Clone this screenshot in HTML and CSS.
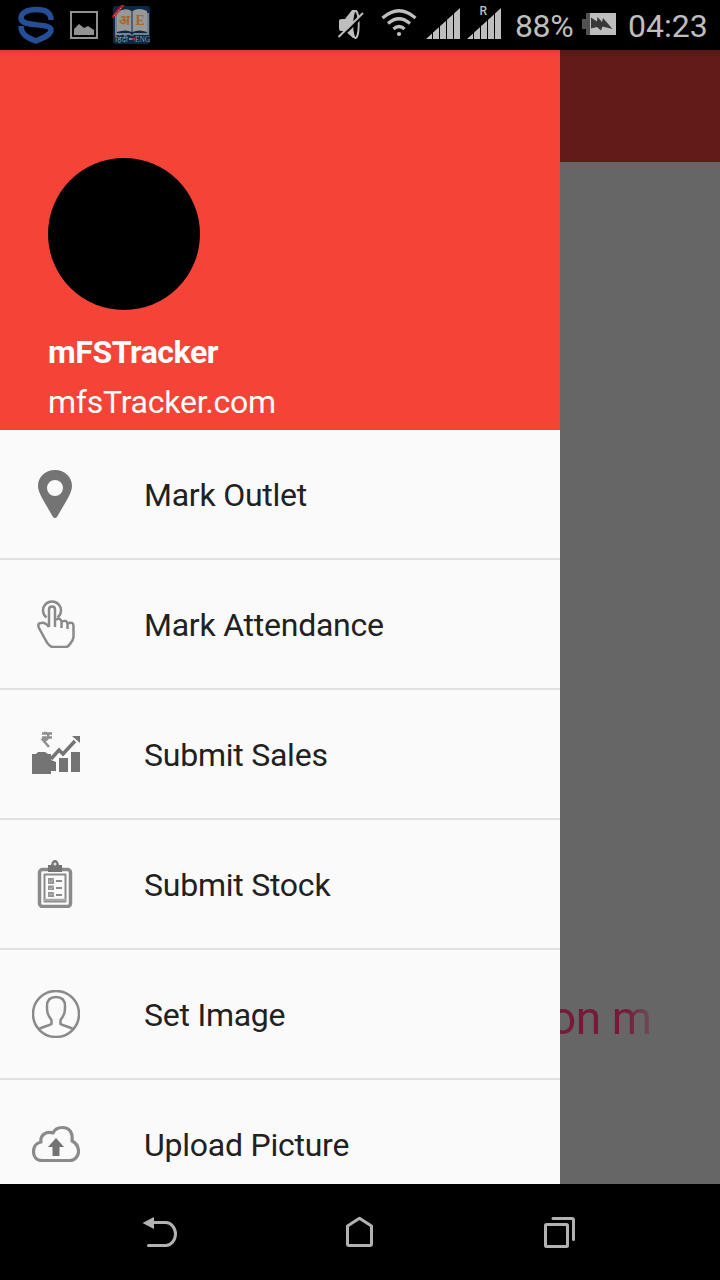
FILE: index.html
```html
<!DOCTYPE html>
<html lang="en">
<head>
<meta charset="utf-8">
<title>mFSTracker</title>
<link rel="stylesheet" href="styles.css">
</head>
<body>
<div class="phone">
  <header class="status">
    <svg class="notifications" width="180" height="50" viewBox="0 0 180 50">
      <path d="M51 20C51 12 44 9.500 36 9.500C27 9.500 21 13 21 18C21 28 51 22 51 30C51 35 43 38 36 41C28 38 21 35 21 26" fill="none" stroke="#244f96" stroke-width="5.500"/>
      <path d="M71 12H97V38H71Z" fill="none" stroke="#929292" stroke-width="2"/>
      <path d="M74 35V29L79 24L84 28L88 26L94 30V35Z" fill="#929292"/>
      <rect x="113" y="6" width="37" height="38" rx="3" fill="#0d2744"/>
      <path d="M115 14V35H130Q132 37 134 35H149V13H147V33H134L132 35L130 33H117V14Z" fill="#6f8592"/>
      <path d="M117 12Q126 7 131.500 11V32Q126 29 117 32ZM132.500 11Q139 7 147 11V32Q139 29 132.500 32Z" fill="#979898"/>
      <text class="book-letter" x="119" y="25" textLength="11" lengthAdjust="spacingAndGlyphs">अ</text>
      <text class="book-letter" x="135.500" y="25">E</text>
      <path d="M112 16L121 5H125L113 19Z" fill="#b31824"/>
      <path d="M114 16L122 7" stroke="#ca8c8f" stroke-width="1" stroke-dasharray="2 1"/>
      <text class="book-caption" x="115" y="42" textLength="13" lengthAdjust="spacingAndGlyphs">हिंदी</text>
      <path d="M129 39H134" stroke="#758994" stroke-width="2"/>
      <path d="M131 39L135 37V41Z" fill="#b8202a"/>
      <text class="book-caption" x="135" y="42" textLength="15" lengthAdjust="spacingAndGlyphs">ENG</text>
    </svg>
    <div class="system">
      <svg width="171" height="50" viewBox="335 0 171 50" fill="#bebebe">
        <path d="M339 21Q339 19 342 19H345L352 10H357V38H353L345 31H341Q339 31 339 28Z"/>
        <ellipse cx="355.500" cy="24.500" rx="3.200" ry="13.500" fill="#000" stroke="#bebebe" stroke-width="1.800"/>
        <path d="M339.500 38.500L364.500 14.500" stroke="#000" stroke-width="2.500"/>
        <path d="M338.500 37L363 13" stroke="#bebebe" stroke-width="2"/>
        <g fill="none" stroke="#bebebe" stroke-width="3.200">
          <path d="M382.500 18Q399 3.500 415.500 18"/><path d="M388 23.500Q399 14 410 23.500"/><path d="M393.500 29Q399 24 404.500 29"/>
        </g>
        <circle cx="399" cy="34" r="2.100"/>
        <path d="M426 39L460 8V39ZM467 39L501 8V39Z"/>
        <path d="M432.500 10V40M439.500 8V40M446.500 8V40M453.500 8V40M473.500 18V40M480.500 18V40M487.500 8V40M494.500 8V40" stroke="#000" stroke-width="1"/>
        <text class="roaming" x="479.500" y="14.500">R</text>
      </svg>
      <span class="percent">88%</span>
      <svg class="battery" width="34" height="24" viewBox="582 0 34 24">
        <path d="M582 7H586V1H590V23H586V17H582Z" fill="#515151"/>
        <path d="M590 1H616V23H590Z" fill="#bebebe"/>
        <path d="M591 5.500L597 9.500L597.500 5L602 10L603 6L612.500 17L602.500 14.500L601 18.500L597 15L591 16.500Z" fill="#383838"/>
      </svg>
      <time class="clock">04:23</time>
    </div>
  </header>
  <main class="screen">
    <aside class="drawer">
      <section class="profile">
        <div class="avatar"></div>
        <h1 class="name">mFSTracker</h1>
        <p class="site">mfsTracker.com</p>
      </section>
      <nav class="menu">
        <a class="item"><svg class="icon" viewBox="0 0 48 48"><path fill-rule="evenodd" d="M23 0C13 0 6 7 6 16C6 20 8 24 10 28L21 47Q23 49 25 47L36 28C38 24 40 20 40 16C40 7 33 0 23 0ZM23 10A8 8 0 1 1 23 26A8 8 0 1 1 23 10Z" fill="#747474"/></svg><span class="label">Mark Outlet</span></a>
        <a class="item"><svg class="icon line" viewBox="0 0 48 48"><path d="M14.500 17.500A9 9 0 1 1 25.500 17.500M17 27V9.500Q17 6.500 20 6.500Q23 6.500 23 9.500V27M23 20Q29 17 29.500 22V28M29.500 22Q35 19 35.500 24V29M35.500 23.500Q41.500 21 41.500 26V37Q41 41 38 44Q36 47 34 47H21C18 47 15 43 13 39L7 28Q5 23 9 23Q13 22 17 27"/></svg><span class="label">Mark Attendance</span></a>
        <a class="item"><svg class="icon" viewBox="0 0 48 48"><path d="M0 24H4L6 22H13L16 24H19V30L24 32V41H19V44H0ZM27 28H36V42H27ZM39 22H48V42H39Z" fill="#747474"/><path d="M19 29L27 20L31 24L43 11" fill="none" stroke="#747474" stroke-width="3.500"/><path d="M40 6H48V13Z" fill="#747474"/><path d="M10 3.500H20M10 7.500H20M12 3H14Q19 6 14 10H11L17 17" fill="none" stroke="#8f8f8f" stroke-width="2.500"/></svg><span class="label">Submit Sales</span></a>
        <a class="item"><svg class="icon line" viewBox="0 0 48 48"><rect x="7.500" y="9.500" width="31" height="37" rx="3" stroke-width="3.500"/><rect x="12.500" y="14.500" width="21" height="27" stroke-width="2"/><path d="M16 5H19Q20 0 23 0Q26 0 27 5H30V12H16Z" fill="#747474" stroke="none"/><circle cx="23" cy="4" r="1.500" fill="#e0e0e0" stroke="none"/><path d="M12 40H34" stroke="#a7a7a7"/><path d="M16 18H22V24H16ZM16 25.500H22V30H16ZM16 32H22V37H16Z" fill="#959595" stroke="none"/><path d="M17 21L19 22L22 19M17 28L19 29L22 26M17 34L19 35L22 33" stroke="#b8b8b8" stroke-width="1"/><path d="M24 21H30M24 28H30M24 35H30" stroke-width="2"/></svg><span class="label">Submit Stock</span></a>
        <a class="item"><svg class="icon line" viewBox="0 0 48 48"><circle cx="24" cy="24" r="23"/><path d="M7 39C12 36 17 36 19.500 34V30C15 24 15 22 15 16Q15 7 24 7Q33 7 33 16C33 22 33 24 28.500 30V34C31 36 36 36 41 39"/></svg><span class="label">Set Image</span></a>
        <a class="item last"><svg class="icon line" viewBox="0 0 48 48"><path stroke-width="3.200" d="M10 40.500C4 40.500 1.500 36 1.500 31.500C1.500 27 4 23 9 22C8 15 14 11 21 13C23 9 26 7.500 30 7.500C38 7.500 41 13 40 21C44 23 46.500 27 46.500 31.500C46.500 36 43 40.500 38 40.500Z"/><path d="M24 18L32 27H27.500V36H20.500V27H16Z" fill="#747474" stroke="none"/></svg><span class="label">Upload Picture</span></a>
      </nav>
    </aside>
    <div class="page">
      <div class="appbar"></div>
      <div class="marquee"><span class="marquee-text">on m</span></div>
    </div>
  </main>
  <footer class="navbar">
    <svg width="36" height="36" viewBox="142 1214 36 36"><path d="M142.500 1223L154 1217V1229Z" fill="#b2b2b2"/><path d="M153 1222.500H166C171 1222.500 175.500 1228 175.500 1234C175.500 1240 171 1245.500 166 1245.500H148.500" fill="none" stroke="#b2b2b2" stroke-width="3" stroke-linecap="round"/></svg>
    <svg class="home" width="30" height="36" viewBox="344 1214 30 36"><path d="M347.500 1226L359.500 1218.300L371.500 1226V1244Q371.500 1245.500 370 1245.500H349Q347.500 1245.500 347.500 1244Z" fill="none" stroke="#b2b2b2" stroke-width="3" stroke-linejoin="round"/></svg>
    <svg width="34" height="36" viewBox="543 1214 34 36" fill="none" stroke="#b2b2b2" stroke-width="3" stroke-linecap="round"><rect x="545.500" y="1224.500" width="22" height="22" rx="1"/><path d="M553 1218.500H572Q573.500 1218.500 573.500 1220V1239.500"/></svg>
  </footer>
</div>
</body>
</html>
```
FILE: styles.css
```css
* { box-sizing: border-box; }
body { margin: 0; background: #000; font-family: Roboto, "Noto Sans", sans-serif; }
.phone { width: 720px; height: 1280px; display: flex; flex-direction: column; overflow: hidden; }
.status { height: 50px; flex: none; background: #000; display: flex; justify-content: space-between; color: #bebebe; }
.system { display: flex; align-items: flex-start; width: 385px; }
.system svg { flex: none; }
.roaming { font-size: 12px; font-weight: 500; }
.book-letter { font-size: 14px; font-weight: 700; fill: #a8672a; font-family: "Liberation Serif", "Noto Sans", serif; }
.book-caption { font-size: 8px; fill: #7fa0b0; font-family: "Liberation Serif", "Noto Sans", serif; }
.percent { width: 67px; padding-left: 9px; font-size: 32px; line-height: 52px; letter-spacing: -0.4px; flex: none; white-space: nowrap; }
.battery { margin: 12px 0 0 9px; }
.clock { margin-left: 12px; font-size: 32px; line-height: 52px; }
.screen { height: 1134px; flex: none; display: flex; overflow: hidden; }
.drawer { width: 560px; flex: none; background: #fafafa; }
.profile { height: 380px; padding: 108px 48px 0; background: linear-gradient(#dc3b30 0, #f04135 3px, #f54337 7px); color: #fff; }
.avatar { width: 152px; height: 152px; border-radius: 50%; background: #000; }
.name { margin: 22px 0 0; font-size: 32px; line-height: 40px; font-weight: 700; letter-spacing: -.45px; white-space: nowrap; }
.site { margin: 10px 0 0; font-size: 32px; line-height: 40px; letter-spacing: -.25px; white-space: nowrap; }
.item { height: 130px; display: flex; align-items: center; padding-left: 32px; gap: 64px; border-bottom: 2px solid #e1e1e1; color: #212121; }
.last { border-bottom: 0; height: 128px; }
.icon { width: 48px; height: 48px; flex: none; }
.line { fill: none; stroke: #8a8a8a; stroke-width: 2.5; stroke-linejoin: round; }
.label { font-size: 32px; line-height: 40px; padding-top: 2px; letter-spacing: -.24px; white-space: nowrap; }
.page { width: 160px; background: #666; }
.appbar { height: 112px; background: linear-gradient(#551713, #621b17 7px); }
.marquee { height: 70px; margin-top: 821px; width: 98px; overflow: hidden; display: flex; }
.marquee-text { font-size: 46px; line-height: 70px; margin-left: -10px; letter-spacing: -.4px; white-space: nowrap; color: transparent; background: linear-gradient(90deg, #761a3b 0, #761a3b 76px, #6a5059 101px); background-clip: text; }
.navbar { height: 96px; flex: none; background: #000; display: flex; justify-content: space-between; align-items: center; padding: 0 143px 0 142px; }
.home { margin-right: 4px; }
```
